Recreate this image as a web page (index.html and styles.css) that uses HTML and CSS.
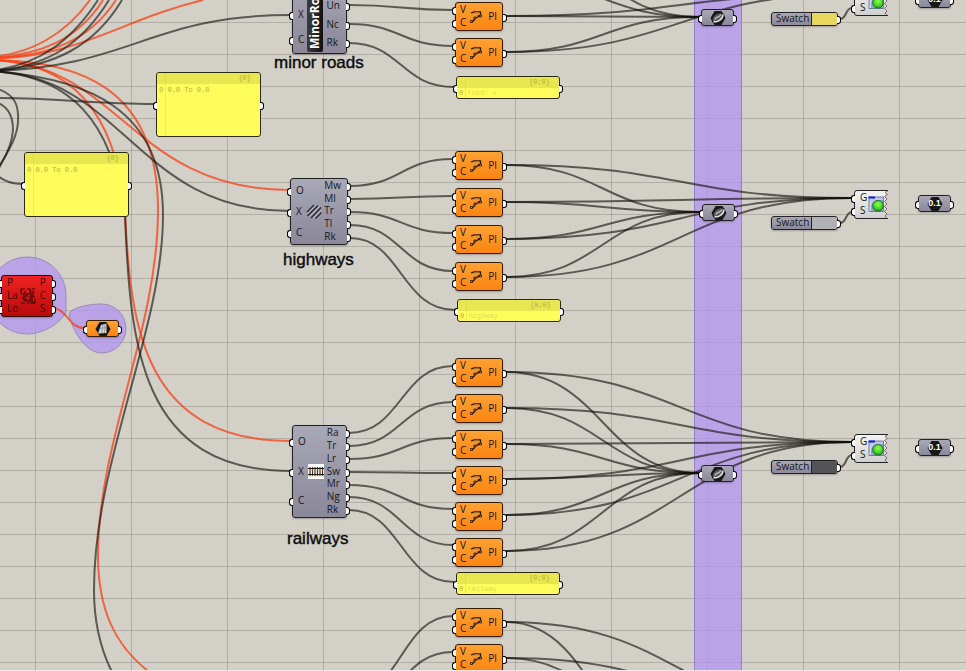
FILE: index.html
```html
<!DOCTYPE html>
<html lang="en">
<head>
<meta charset="utf-8">
<title>Map definition</title>
<link rel="stylesheet" href="styles.css">
</head>
<body>
<svg class="defs" aria-hidden="true">
  <defs>
    <linearGradient id="paper" x1="0" y1="0" x2="0" y2="1"><stop offset="0" stop-color="#f4f4f2"/><stop offset="1" stop-color="#cfcfcd"/></linearGradient>
    <linearGradient id="sky" x1="0" y1="0" x2="0" y2="1"><stop offset="0" stop-color="#b9bdec"/><stop offset="1" stop-color="#e2e6fa"/></linearGradient>
    <radialGradient id="ball" cx=".5" cy=".35" r=".7"><stop offset="0" stop-color="#8dff4a"/><stop offset=".6" stop-color="#45d426"/><stop offset="1" stop-color="#1c8a14"/></radialGradient>
    <symbol id="polyline" viewBox="0 0 12 12">
      <path d="M1 2 4 .8H10.500V5H7.500" fill="none" stroke="#2c1a08" stroke-width="1.300"/>
      <path d="M2 3 5 2H9" fill="none" stroke="#b98a50" stroke-width=".8"/>
      <path d="M9 5.500 4.500 7.500 4 9.500 1 11" fill="none" stroke="#2c1a08" stroke-width="1.300"/>
      <g fill="#c09a60" stroke="#1d1206" stroke-width=".8"><path d="M9.500 4h2v2h-2zM4 6h2v2H4zM.5 9.500h2v2h-2z"/></g>
    </symbol>
    <symbol id="curve" viewBox="0 0 16 16">
      <path d="M4.500 1h7L15.500 8l-4 7h-7L.5 8z" fill="#1d1d20"/>
      <ellipse cx="8" cy="8" rx="6.500" ry="4.600" transform="rotate(-35 8 8)" fill="#5a5a5d" stroke="#0e0e10"/>
      <path d="M3.500 11.500C7 13 13 9 13 4.500" fill="none" stroke="#e4e4e6" stroke-width="1.400"/>
      <path d="M5 9.500C6 6 8 9 11 4.500" fill="none" stroke="#c8c8ca" stroke-width="1.200"/>
    </symbol>
    <symbol id="surface" viewBox="0 0 16 16">
      <path d="M4.500 1h7L15.500 8l-4 7h-7L.5 8z" fill="#17171a"/>
      <path d="M6 4 11.500 2.500V12L3 12.500z" fill="#d4d4d6"/>
      <path d="M8 3.500 6.500 12.500M10 3 9.500 12M5 7.500 11.500 6.500" stroke="#88888a" stroke-width=".7"/>
    </symbol>
    <symbol id="hexagon" viewBox="0 0 16 16">
      <path d="M4.500 1h7L15.500 8l-4 7h-7L.5 8z" fill="#17171a"/>
    </symbol>
    <symbol id="lanes" viewBox="0 0 16 16">
      <g fill="none" stroke="#26262e" stroke-width="1.300"><path d="M1 8 8 1M1.500 12 12 1.500M5 14 15 3.500M9.500 14.500 15.500 8.500"/></g>
      <g fill="none" stroke="#c4c4ce" stroke-width=".8"><path d="M1.500 9.500 9.500 1.500M3.500 12.500 13.500 2.500M7.500 14 15.500 6"/></g>
    </symbol>
    <symbol id="rails" viewBox="0 0 16 16">
      <path d="M0 0h16v15H0z" fill="#fff"/>
      <path d="M2 3v9M4.500 3v9M7 3v9M9.500 3v9M12 3v9M14.500 3v9" stroke="#4c2c14" stroke-width="1.200"/>
      <path d="M0 4.500h16M0 10.500h16" stroke="#1c1a16"/>
      <path d="M0 6h16M0 12h16" stroke="#c9ad72" stroke-width=".6"/>
    </symbol>
    <symbol id="code" viewBox="0 0 16 16">
      <g fill="none" stroke="#3c0505" stroke-width="1.200"><path d="M1 5V1h4M7 1h3v3h5M12 1h3M5 3v3H1M3 8h4V5M8 6h3v3M13 5v4h2M1 10h3v3M6 10v3h4v-3M1 15h4M7 15h2M12 10v5M15 11v4h-5M4 8v2M9 9h3"/></g>
    </symbol>
    <symbol id="preview" viewBox="0 0 34 29">
      <path d="M3 .5H34l-3 2 2.500 2-3 2 2.500 2.500-2.500 2.500 2.500 2.500-2.500 2.500 2.500 2.500-2.500 2.500 2.500 2.500-2 2 2 2.500H3A2.500 2.500 0 0 1 .5 26V3A2.500 2.500 0 0 1 3 .5" fill="url(#paper)"/>
      <path d="M34 .5H3A2.500 2.500 0 0 0 .5 3V26A2.500 2.500 0 0 0 3 28.500H34" fill="none" stroke="#222"/>
      <path d="m34 .5-3 2 2.500 2-3 2 2.500 2.500-2.500 2.500 2.500 2.500-2.500 2.500 2.500 2.500-2.500 2.500 2.500 2.500-2 2 2 2.500" fill="none" stroke="#6b4c68" stroke-width=".8"/>
      <path d="M15 7h14.500v14.500H15z" fill="url(#sky)" stroke="#555a70" stroke-width=".7"/>
      <path d="M14.500 6.500H21v2h-6.500z" fill="#0b1edb"/>
      <path d="M17 21.500C16 14 19 10 24 10H29V21.500z" fill="#1d6d70" opacity=".45"/>
      <circle cx="24" cy="15.800" r="5.300" fill="url(#ball)" stroke="#1a5c20" stroke-width=".8"/>
    </symbol>
  </defs>
</svg>

<main class="canvas">
  <div class="band"></div>

  <svg class="wires" aria-hidden="true">
    <g class="blob">
      <path d="M66 312C62 322 44 334 27 334A38.500 38.500 0 0 1 27 257C50 257 66 275 66 296V309Q66 311 66 312Z"/>
      <path d="M69 315C68 309 86 304 101 304A24.500 24.500 0 0 1 102 353C84 353 72 328 69 315Z"/>
    </g>
    <g class="wire hot">
      <path d="M-10 57C30 54 65 35 90 0"/>
      <path d="M-10 58C40 55 78 40 103 0"/>
      <path d="M-10 58C50 57 90 40 116 0"/>
      <path d="M-10 59C80 57 120 20 203 0"/>
      <path d="M-10 60C120 62 130 189 289 190"/>
      <path d="M-10 60C75 60 158 85 158 210C158 330 98 440 98 555C98 610 115 645 148 671"/>
      <path d="M-10 60C70 62 115 110 125 210C130 330 145 441 291 441"/>
      <path d="M53 308C67 309 69 328 84 328"/>
    </g>
    <g class="wire">
      <path d="M-10 71C40 65 72 40 98 0"/>
      <path d="M-10 71C50 67 83 42 109 0"/>
      <path d="M-10 71C55 68 95 45 122 0"/>
      <path d="M-10 71C130 68 150 15 291 15"/>
      <path d="M-10 71C125 75 135 211 290 211"/>
      <path d="M-10 71C90 78 163 110 163 215C163 330 94 460 94 590C94 622 101 650 112 672"/>
      <path d="M-10 71C70 75 112 120 125 215C130 345 140 471 291 471"/>
      <path d="M-5 98C60 98 90 104 155 104"/>
      <path d="M-2 89C15 95 19 105 18 122C17 140 5 155 -2 170"/>
      <path d="M-2 103C10 108 13 120 13 130C12 145 5 158 -2 168"/>
      <path d="M-2 176C5 182 12 184 22 184"/>
    </g>
    <g class="wire">
      <path d="M349 5C401 5 401 10 453 10"/>
      <path d="M349 24C401 24 401 46 453 46"/>
      <path d="M349 43C401 43 401 87 454 87"/>
      <path d="M350 186C401 186 401 159 453 159"/>
      <path d="M350 199C401 199 401 196 453 196"/>
      <path d="M350 212C401 212 401 233 453 233"/>
      <path d="M350 225C401 225 401 271 453 271"/>
      <path d="M350 238C401 238 401 310 455 310"/>
      <path d="M349 433C401 433 401 366 453 366"/>
      <path d="M349 446C401 446 401 402 453 402"/>
      <path d="M349 459C401 459 401 438 453 438"/>
      <path d="M349 472C401 472 401 473 453 473"/>
      <path d="M349 485C401 485 401 509 453 509"/>
      <path d="M349 497C401 497 401 545 453 545"/>
      <path d="M349 510C401 510 401 582 454 582"/>
      <path d="M349 696C401 696 401 616 453 616"/>
      <path d="M349 709C401 709 401 652 453 652"/>
    </g>
    <g class="wire">
      <path d="M506-56C603-56 603 17 700 17"/>
      <path d="M506-20C603-20 603 17 700 17"/>
      <path d="M506 16C603 16 603 17 700 17"/>
      <path d="M506 52C603 52 603 17 700 17"/>
      <path d="M506 16C680 16 680-6 852-6"/>
      <path d="M506 52C680 52 680-6 852-6"/>
      <path d="M506 165C603 165 603 212 700 212"/>
      <path d="M506 202C603 202 603 212 700 212"/>
      <path d="M506 239C603 239 603 212 700 212"/>
      <path d="M506 277C603 277 603 212 700 212"/>
      <path d="M506 165C680 165 680 198 852 198"/>
      <path d="M506 202C680 202 680 198 852 198"/>
      <path d="M506 239C680 239 680 198 852 198"/>
      <path d="M506 277C680 277 680 198 852 198"/>
      <path d="M506 372C603 372 603 473 700 473"/>
      <path d="M506 408C603 408 603 473 700 473"/>
      <path d="M506 444C603 444 603 473 700 473"/>
      <path d="M506 479C603 479 603 473 700 473"/>
      <path d="M506 515C603 515 603 473 700 473"/>
      <path d="M506 551C603 551 603 473 700 473"/>
      <path d="M506 372C680 372 680 442 852 442"/>
      <path d="M506 408C680 408 680 442 852 442"/>
      <path d="M506 444C680 444 680 442 852 442"/>
      <path d="M506 479C680 479 680 442 852 442"/>
      <path d="M506 515C680 515 680 442 852 442"/>
      <path d="M506 551C680 551 680 442 852 442"/>
      <path d="M506 622C603 622 603 785 700 785"/>
      <path d="M506 658C603 658 603 745 700 745"/>
      <path d="M506 622C680 622 680 715 852 715"/>
      <path d="M506 658C680 658 680 715 852 715"/>
      <path d="M840 19C847 19 845 8 852 8"/>
      <path d="M840 223C847 223 845 212 852 212"/>
      <path d="M840 467C847 467 845 455 852 455"/>
    </g>
  </svg>

  <section class="panel large at-domain-a"><header>{0}</header><p>0 0.0 To 0.0</p></section>
  <section class="panel large at-domain-b"><header>{0}</header><p>0 0.0 To 0.0</p></section>

  <section class="node error at-location">
    <ul class="in"><li>P</li><li>La</li><li>Lo</li></ul>
    <svg class="icon"><use href="#code"/></svg>
    <ul class="out"><li>P</li><li>C</li><li>S</li></ul>
  </section>
  <div class="node param warn at-surface"><svg class="icon"><use href="#surface"/></svg></div>

  <section class="node cluster at-minor">
    <ul class="in"><li></li><li>X</li><li>C</li></ul>
    <strong class="nickname">MinorRo</strong>
    <ul class="out"><li></li><li>Un</li><li>Nc</li><li>Rk</li></ul>
  </section>
  <h2 class="title at-minor-title">minor roads</h2>

  <section class="node cluster at-highways">
    <ul class="in"><li>O</li><li>X</li><li>C</li></ul>
    <svg class="icon"><use href="#lanes"/></svg>
    <ul class="out"><li>Mw</li><li>Ml</li><li>Tr</li><li>Tl</li><li>Rk</li></ul>
  </section>
  <h2 class="title at-highways-title">highways</h2>

  <section class="node cluster at-railways">
    <ul class="in"><li>O</li><li>X</li><li>C</li></ul>
    <svg class="icon"><use href="#rails"/></svg>
    <ul class="out"><li>Ra</li><li>Tr</li><li>Lr</li><li>Sw</li><li>Mr</li><li>Ng</li><li>Rk</li></ul>
  </section>
  <h2 class="title at-railways-title">railways</h2>

  <div class="stack at-minor-lines">
    <div class="node pline"><ul class="in"><li>V</li><li>C</li></ul><svg class="icon"><use href="#polyline"/></svg><ul class="out"><li>Pl</li></ul></div>
    <div class="node pline"><ul class="in"><li>V</li><li>C</li></ul><svg class="icon"><use href="#polyline"/></svg><ul class="out"><li>Pl</li></ul></div>
  </div>
  <section class="panel small at-minor-panel"><header>{0;0}</header><p>0 <span>road: x</span></p></section>

  <div class="stack loose at-highways-lines">
    <div class="node pline"><ul class="in"><li>V</li><li>C</li></ul><svg class="icon"><use href="#polyline"/></svg><ul class="out"><li>Pl</li></ul></div>
    <div class="node pline"><ul class="in"><li>V</li><li>C</li></ul><svg class="icon"><use href="#polyline"/></svg><ul class="out"><li>Pl</li></ul></div>
    <div class="node pline"><ul class="in"><li>V</li><li>C</li></ul><svg class="icon"><use href="#polyline"/></svg><ul class="out"><li>Pl</li></ul></div>
    <div class="node pline"><ul class="in"><li>V</li><li>C</li></ul><svg class="icon"><use href="#polyline"/></svg><ul class="out"><li>Pl</li></ul></div>
  </div>
  <section class="panel small at-highways-panel"><header>{0;0}</header><p>0 <span>highway</span></p></section>

  <div class="stack at-railways-lines">
    <div class="node pline"><ul class="in"><li>V</li><li>C</li></ul><svg class="icon"><use href="#polyline"/></svg><ul class="out"><li>Pl</li></ul></div>
    <div class="node pline"><ul class="in"><li>V</li><li>C</li></ul><svg class="icon"><use href="#polyline"/></svg><ul class="out"><li>Pl</li></ul></div>
    <div class="node pline"><ul class="in"><li>V</li><li>C</li></ul><svg class="icon"><use href="#polyline"/></svg><ul class="out"><li>Pl</li></ul></div>
    <div class="node pline"><ul class="in"><li>V</li><li>C</li></ul><svg class="icon"><use href="#polyline"/></svg><ul class="out"><li>Pl</li></ul></div>
    <div class="node pline"><ul class="in"><li>V</li><li>C</li></ul><svg class="icon"><use href="#polyline"/></svg><ul class="out"><li>Pl</li></ul></div>
    <div class="node pline"><ul class="in"><li>V</li><li>C</li></ul><svg class="icon"><use href="#polyline"/></svg><ul class="out"><li>Pl</li></ul></div>
  </div>
  <section class="panel small at-railways-panel"><header>{0;0}</header><p>0 <span>railway</span></p></section>

  <div class="stack at-next-lines">
    <div class="node pline"><ul class="in"><li>V</li><li>C</li></ul><svg class="icon"><use href="#polyline"/></svg><ul class="out"><li>Pl</li></ul></div>
    <div class="node pline"><ul class="in"><li>V</li><li>C</li></ul><svg class="icon"><use href="#polyline"/></svg><ul class="out"><li>Pl</li></ul></div>
  </div>

  <div class="node param at-curve-a"><svg class="icon"><use href="#curve"/></svg></div>
  <div class="node param at-curve-b"><svg class="icon"><use href="#curve"/></svg></div>
  <div class="node param at-curve-c"><svg class="icon"><use href="#curve"/></svg></div>

  <div class="node swatch at-swatch-a"><span>Swatch</span><i class="chip yellow"></i></div>
  <div class="node swatch at-swatch-b"><span>Swatch</span><i class="chip silver"></i></div>
  <div class="node swatch at-swatch-c"><span>Swatch</span><i class="chip slate"></i></div>

  <section class="preview at-preview-a"><svg class="sheet"><use href="#preview"/></svg><ul class="in"><li></li><li>S</li></ul></section>
  <section class="preview at-preview-b"><svg class="sheet"><use href="#preview"/></svg><ul class="in"><li>G</li><li>S</li></ul></section>
  <section class="preview at-preview-c"><svg class="sheet"><use href="#preview"/></svg><ul class="in"><li>G</li><li>S</li></ul></section>

  <div class="node param at-number-a"><svg class="icon"><use href="#hexagon"/></svg><b class="digits">0.1</b></div>
  <div class="node param at-number-b"><svg class="icon"><use href="#hexagon"/></svg><b class="digits">0.1</b></div>
  <div class="node param at-number-c"><svg class="icon"><use href="#hexagon"/></svg><b class="digits">0.1</b></div>
</main>
</body>
</html>
```
FILE: styles.css
```css
* { box-sizing: border-box; }
body { margin: 0; }
ul, p, h2 { margin: 0; padding: 0; list-style: none; }

.defs { position: absolute; width: 0; height: 0; }

.canvas {
  position: relative;
  height: 100vh;
  overflow: hidden;
  border-bottom: 1px solid #ecebe9;
  background-color: #d3d0c8;
  background-image:
    linear-gradient(to right, rgba(60, 58, 50, .22) 1px, transparent 1px),
    linear-gradient(to bottom, rgba(60, 58, 50, .22) 1px, transparent 1px);
  background-size: 96px 96px, 32px 32px;
  background-position: 35px 0, 0 22px;
  font: 10px/12px "Open Sans", "Noto Sans", sans-serif;
  color: #17171b;
}

.band {
  position: absolute;
  top: 0;
  bottom: 0;
  left: 694px;
  width: 48px;
  border: solid rgba(120, 95, 170, .5);
  border-width: 0 1px;
  background: rgba(178, 148, 240, .75);
}

.wires { position: absolute; inset: 0; width: 100%; height: 100%; }
.wire path { fill: none; stroke: rgba(18, 16, 12, .62); stroke-width: 2; }
.wire.hot path { stroke: rgba(250, 62, 18, .74); }
.blob path { fill: rgba(178, 148, 240, .75); stroke: #998cb8; }

/* Components */
.node {
  position: absolute;
  display: flex;
  justify-content: space-between;
  padding: 1px 0;
  border: 1px solid #222;
  border-radius: 3px;
  background: linear-gradient(#a9a8b6, #8a8899);
  box-shadow: 0 1px 2px rgba(0, 0, 0, .25);
}
.node .icon { flex: none; align-self: center; width: 16px; height: 16px; margin: 0 -4px; }
.in, .out { display: flex; flex-direction: column; line-height: 10px; }
.in li, .out li {
  position: relative;
  display: flex;
  flex: 1 1 0;
  align-items: center;
  min-height: 0;
  padding: 0 5px 2px;
}
.out li { padding: 0 6px 2px; }

/* Grips */
.in li::before, .out li::after, .param::before, .param::after, .swatch::after, .panel::before, .panel::after {
  content: "";
  position: absolute;
  top: 50%;
  width: 3px;
  height: 6px;
  margin-top: -3px;
  border: 1px solid #000;
  background: #fff;
}
.in li::before, .param::before, .panel::before { left: -4px; border-right: 0; border-radius: 3px 0 0 3px; }
.out li::after, .param::after, .swatch::after, .panel::after { right: -4px; border-left: 0; border-radius: 0 3px 3px 0; }

.stack { position: absolute; left: 455px; display: flex; flex-direction: column; gap: 7px; }
.stack.loose { gap: 8px; }
.pline { position: relative; width: 48px; height: 29px; border-color: #3a1c00; background: linear-gradient(#ffa233, #fb8412); }
.pline .in li { padding: 0 4px 2px; }
.node.pline .icon { width: 12px; height: 12px; margin: 0; }

.error { border-color: #300; background: linear-gradient(#f02222, #b80a0a); color: #3c0505; }
.warn { border-color: #3a1c00; background: linear-gradient(#ffa233, #fb8412); }

.param { width: 33px; height: 17px; padding: 0; justify-content: center; }
.digits { position: absolute; inset: 0; text-align: center; font: bold 9px/15px "Liberation Sans", sans-serif; color: #fff; }

.nickname {
  flex: none;
  display: flex;
  align-items: center;
  width: 16px;
  margin: 0 -3px;
  padding-top: 3px;
  border-radius: 2px;
  background: linear-gradient(to right, #111, #3c3c3c);
  color: #fff;
  font-size: 12px;
  line-height: 16px;
  writing-mode: vertical-rl;
  transform: rotate(180deg);
}

.title {
  position: absolute;
  font: 17px/20px "Liberation Sans", sans-serif;
  color: #0c0c0c;
  -webkit-text-stroke: 0.4px #0c0c0c;
}

.swatch { width: 67px; height: 14px; padding: 0; }
.swatch span { padding-left: 4px; line-height: 11px; }
.chip { width: 26px; border-left: 1px solid #222; border-radius: 0 2px 2px 0; }
.yellow { background: #e8d75f; }
.silver { background: #b1b0b2; }
.slate { background: #555457; }

.preview { position: absolute; display: flex; width: 34px; height: 29px; padding: 1px 0; }
.preview .in li { padding-left: 6px; }
.preview .in li::before { left: -3px; }
.sheet { position: absolute; inset: 0; width: 100%; height: 100%; }

/* Text panels */
.panel {
  position: absolute;
  border: 1px solid #2a2a10;
  border-radius: 3px;
  background: linear-gradient(to right, transparent 8px, rgba(140, 140, 30, .3) 8px, transparent 9px), #fffc5c;
  font: 7px/10px "Liberation Mono", monospace;
  color: #b3af40;
}
.panel header { height: 11px; padding-right: 9px; background: rgba(190, 190, 60, .35); text-align: right; }
.panel p { padding-left: 2px; line-height: 12px; }
.panel span { opacity: .4; }
.large { width: 105px; height: 65px; }
.small { width: 104px; height: 23px; }
.small p { line-height: 10px; }

/* Places on the canvas */
.at-domain-a { left: 156px; top: 72px; }
.at-domain-b { left: 24px; top: 152px; }
.at-location { left: 1px; top: 275px; width: 52px; height: 42px; }
.at-surface { left: 86px; top: 320px; }
.at-minor { left: 292px; top: -23px; width: 55px; height: 77px; }
.at-highways { left: 290px; top: 178px; width: 58px; height: 67px; }
.at-railways { left: 292px; top: 425px; width: 55px; height: 93px; }
.at-minor-title { left: 274px; top: 53px; }
.at-highways-title { left: 283px; top: 250px; }
.at-railways-title { left: 287px; top: 529px; }
.at-minor-lines { top: 2px; }
.at-highways-lines { top: 151px; }
.at-railways-lines { top: 358px; }
.at-next-lines { top: 608px; }
.at-minor-panel { left: 456px; top: 76px; }
.at-highways-panel { left: 457px; top: 299px; }
.at-railways-panel { left: 456px; top: 572px; }
.at-curve-a { left: 701px; top: 9px; }
.at-curve-b { left: 702px; top: 204px; }
.at-curve-c { left: 701px; top: 465px; }
.at-swatch-a { left: 771px; top: 12px; }
.at-swatch-b { left: 771px; top: 216px; }
.at-swatch-c { left: 771px; top: 460px; }
.at-preview-a { left: 854px; top: -13px; }
.at-preview-b { left: 854px; top: 190px; }
.at-preview-c { left: 854px; top: 434px; }
.at-number-a { left: 918px; top: -9px; }
.at-number-b { left: 918px; top: 195px; }
.at-number-c { left: 918px; top: 439px; }
```
